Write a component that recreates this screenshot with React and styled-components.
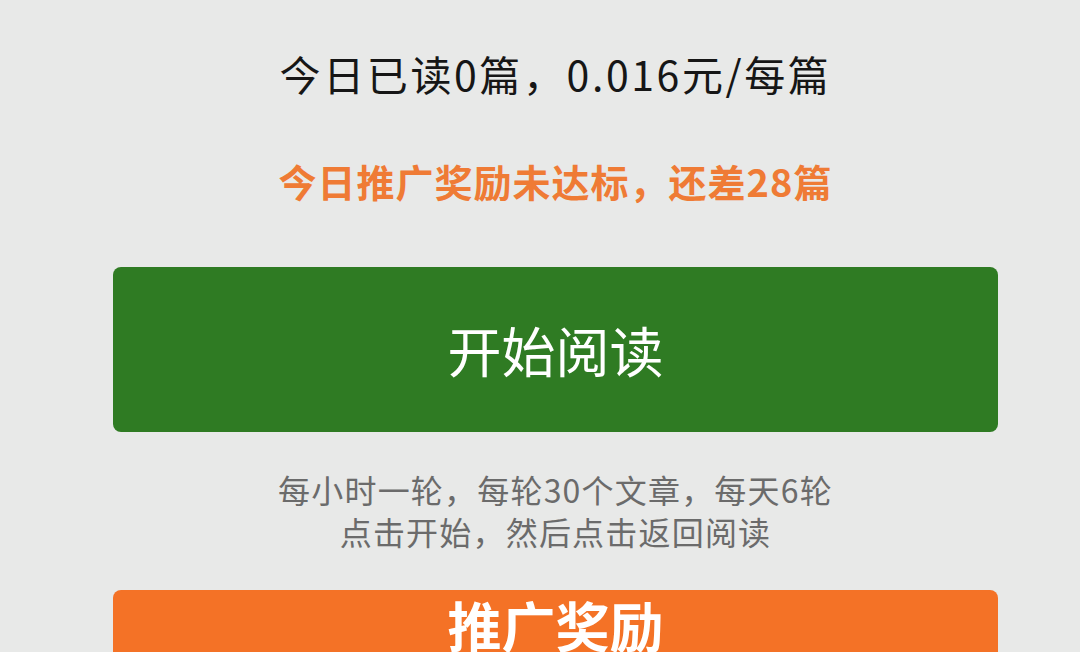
import styled, { createGlobalStyle } from "styled-components"

const Global = createGlobalStyle`
  html, body {
    margin: 0;
    padding: 0;
    background: #e8e9e8;
    font-family: "Noto Sans CJK SC", "Noto Sans", sans-serif;
  }
`

const Page = styled.div`
  width: 1080px;
  height: 652px;
  overflow: hidden;
  box-sizing: border-box;
  padding: 0 82px 0 113px;
  display: flex;
  flex-direction: column;
  align-items: stretch;
`

const Stat = styled.p`
  margin: 48px 0 0;
  text-align: center;
  font-size: 41px;
  line-height: 50px;
  letter-spacing: 2.6px;
  color: #161616;
`

const Notice = styled.p`
  margin: 58px 0 0;
  text-align: center;
  font-size: 38px;
  line-height: 50px;
  letter-spacing: 1px;
  font-weight: 700;
  color: #ef7b35;
`

const Button = styled.div`
  margin-top: ${p => p.$top}px;
  height: ${p => p.$height}px;
  border-radius: 8px;
  background: ${p => p.$bg};
  color: #fff;
  display: flex;
  justify-content: center;
  align-items: ${p => (p.$alignTop ? "flex-start" : "center")};
  font-size: 54px;
  font-weight: ${p => (p.$bold ? 700 : 400)};
  line-height: 70px;
  flex-shrink: 0;
`

const Hint = styled.div`
  margin-top: 36px;
  text-align: center;
  font-size: 32px;
  line-height: 42px;
  letter-spacing: 1.2px;
  color: #6b6b6b;
`

const App = () => (
  <>
    <Global />
    <Page>
      <Stat>今日已读0篇，0.016元/每篇</Stat>
      <Notice>今日推广奖励未达标，还差28篇</Notice>
      <Button $top={61} $height={165} $bg="#2f7b23">开始阅读</Button>
      <Hint>
        每小时一轮，每轮30个文章，每天6轮
        <br />
        点击开始，然后点击返回阅读
      </Hint>
      <Button $top={38} $height={140} $bg="#f47226" $bold $alignTop>推广奖励</Button>
    </Page>
  </>
)

export default App
